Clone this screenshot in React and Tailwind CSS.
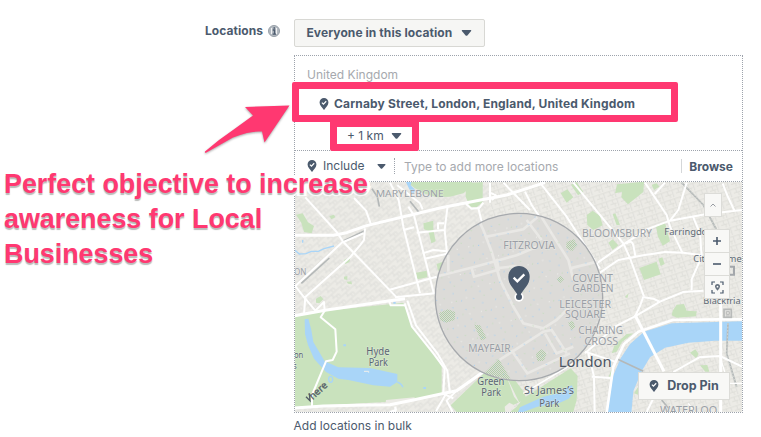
import React from "react";

function PinCheck({ className }) {
  return (
    <svg viewBox="0 0 10 13" className={className}>
      <path d="M5 0A4.8 4.8 0 0 0 .2 4.8C.2 8 3 9.600 4.300 12.300Q5 13.400 5.700 12.300C7 9.600 9.800 8 9.800 4.800A4.800 4.800 0 0 0 5 0Z" fill="#4b5a6d" />
      <path d="M2.700 5 4.400 6.600 7.400 3.500" fill="none" stroke="#fff" strokeWidth="1.300" />
    </svg>
  );
}

function Caret({ className }) {
  return (
    <svg viewBox="0 0 12 7" className={className}>
      <path d="M1 0H11Q12 .3 11.400 1.300L7 6.300Q6 7 5 6.300L.6 1.300Q0 .3 1 0Z" fill="#4b5a6d" />
    </svg>
  );
}

const green = "#c9e2bd";
const water = "#a9d5f8";

const labels = [
  ["MARYLEBONE", 257, 52, 204, 29, "#9aa0a6"],
  ["FITZROVIA", 640, 206, 155, 30, "#9a9fa6"],
  ["BLOOMSBURY", 876, 170, 210, 30, "#9aa0a6"],
  ["Farringdon", 1123, 164, 146, 29, "#5c6874"],
  ["City Thames", 1210, 245, 158, 29, "#5c6874"],
  ["Blackfria", 1240, 373, 112, 29, "#5c6874"],
  ["COVENT", 847, 306, 122, 30, "#9a9fa6"],
  ["GARDEN", 847, 337, 124, 30, "#9a9fa6"],
  ["LEICESTER", 808, 384, 155, 30, "#9a9fa6"],
  ["SQUARE", 825, 415, 122, 30, "#9a9fa6"],
  ["CHARING", 865, 461, 134, 30, "#9a9fa6"],
  ["CROSS", 883, 495, 102, 30, "#9a9fa6"],
  ["MAYFAIR", 535, 515, 127, 30, "#9a9fa6"],
  ["London", 806, 561, 159, 44, "#4b5563"],
  ["Hyde", 229, 525, 70, 30, "#5a6672"],
  ["Park", 236, 559, 58, 30, "#5a6672"],
  ["Green", 562, 614, 81, 30, "#5a6672"],
  ["Park", 574, 649, 59, 30, "#5a6672"],
  ["St James’s", 702, 643, 150, 30, "#5a6672"],
  ["Park", 748, 680, 60, 30, "#5a6672"],
  ["WATERLOO", 1110, 701, 172, 30, "#9aa0a6"],
  ["ON", 12, 284, 37, 29, "#9aa0a6"],
  ["on", 12, 534, 28, 29, "#5a6672"],
  ["s", 8, 568, 12, 29, "#5a6672"],
];

/* Map units are thirds of a pixel, so the finest streets keep whole numbers. */
function LondonMap() {
  return (
    <svg viewBox="15 6 1341 690" preserveAspectRatio="none" className="block h-full w-full">
      <defs>
        <pattern id="streets" width="36" height="24" patternUnits="userSpaceOnUse" patternTransform="rotate(-42)">
          <path d="M0 3H36M0 15H24M6 3V15M24 15V24M15 15V24" stroke="#dcdcd8" strokeWidth="2.500" fill="none" />
        </pattern>
        <pattern id="streetsEast" width="33" height="27" patternUnits="userSpaceOnUse" patternTransform="rotate(-18)">
          <path d="M0 5H33M0 17H20M9 5V17M24 5V27M14 17V27" stroke="#dcdcd8" strokeWidth="2.500" fill="none" />
        </pattern>
        <pattern id="specks" width="93" height="87" patternUnits="userSpaceOnUse" patternTransform="rotate(17)">
          <path d="M8 9h3M39 22h3M71 5h3M20 50h3M59 43h3M83 66h3M42 75h3" stroke="#9dccf5" strokeWidth="3" />
          <path d="M24 28h3M55 60h3M80 31h3M5 73h3" stroke="#bfdcb7" strokeWidth="3" />
          <path d="M50 9h3M12 35h3M74 52h3" stroke="#f2f2ef" strokeWidth="3" />
        </pattern>
        <pattern id="parkDots" width="6" height="6" patternUnits="userSpaceOnUse">
          <path d="M0 1.500h3M3 4.500h3" stroke="#b1cfa8" strokeWidth="3" />
        </pattern>
      </defs>
      <rect width="1360" height="700" fill="#ecebe6" />
      <rect width="600" height="700" fill="url(#streets)" />
      <rect x="600" width="760" height="700" fill="url(#streetsEast)" />

      {/* parks */}
      <g fill={green}>
        <path d="M342 0H548L542 22 520 40 480 50 440 52 400 40 374 24Z" />
        <path d="M528 10 578 6 578 66 560 82 540 80 527 50Z" />
        <path d="M18 104 38 100 54 127 72 138 65 160 42 156 34 128Z" />
        <path d="M118 108 132 104 136 112 124 118Z" />
        <path d="M400 130 430 122 430 150 437 184 424 190 415 152 402 148Z" />
        <path d="M378 278 410 272 412 292 382 298ZM440 252 462 244 462 268 444 272Z" />
        <path d="M162 240 182 230 178 246 166 252ZM162 290 172 288 172 300 162 298ZM170 305 184 304 186 313 174 311Z" />
        <path d="M78 356 92 348 100 358 88 370 78 368Z" />
        <path d="M812 40 832 28 850 52 830 68ZM843 14 860 6 880 36 864 46Z" />
        <path d="M890 105 908 92 930 108 938 136 910 150 892 135Z" />
        <path d="M981 13 1062 5 1060 36 1014 73 994 52 996 35 975 40Z" />
        <path d="M1085 14 1100 10 1108 20 1092 30Z" />
        <path d="M1098 140 1125 128 1140 184 1118 197 1104 170Z" />
        <path d="M955 188 968 178 985 196 968 210ZM968 103 976 100 990 134 980 136Z" />
        <path d="M1048 264 1100 245 1112 283 1062 300ZM1105 236 1117 232 1124 252 1112 258Z" />
        <path d="M1005 350 1016 340 1012 355Z" />
        <path d="M1148 392 1160 374 1182 372 1190 392 1220 394 1218 409 1160 413 1145 406Z" />
        <path d="M965 520 974 494 1010 462 1030 460 996 486 980 515ZM956 590 968 560 962 590Z" />
        <path d="M1200 518 1216 508 1226 522 1218 534ZM1230 556 1252 555 1258 575 1246 575ZM1032 640 1046 618 1046 645Z" />
      </g>
      <path d="M14 410 110 392 340 368 366 436 440 535 455 560 455 645 330 664 14 680Z" fill={green} />
      <path d="M288 660 374 652 370 666 286 676Z" fill="#ecebe6" />
      <path d="M582 580 626 536 700 634 710 656 658 680 650 696H500L482 676Z" fill={green} />
      <path d="M700 655 842 565 863 588 860 660 850 696H660L680 680Z" fill={green} />
      <path d="M650 590 672 650 690 672M644 680 658 668 670 674 662 696H646Z" fill="#ecebe6" />

      {/* water */}
      <g fill={water}>
        <path d="M44 418 55 416 64 450 70 486 104 544 145 562 240 564 322 582 322 606 300 620 250 616 175 600 145 596 108 576 72 536 54 495 45 462Z" />
        <path d="M690 682 760 650 820 636 830 622 846 616 852 636 836 656 806 670 742 680 700 696H684Z" />
        <path d="M952 700 968 590 992 535 1020 492 1062 455 1145 430 1358 424V482L1275 482 1195 488 1125 503 1080 532 1055 574 1030 634 1024 700Z" />
        <path d="M345 0H366L362 16 376 30 370 42 358 28Z" />
      </g>
      <path d="M14 210 28 222 48 221 64 214 85 214 102 206 132 198M38 180v8M322 606q12 4 17 16" fill="none" stroke={water} strokeWidth="4" />
      <ellipse cx="122" cy="598" rx="6" ry="9" fill="none" stroke={water} strokeWidth="4" />
      <path d="M160 496h8M400 624h8M310 368h7" stroke={water} strokeWidth="6" />
      <path d="M222 574h14v4" fill="none" stroke="#f0f0ec" strokeWidth="3" />

      {/* rail lines */}
      <path d="M160 183 224 152M34 310 118 234M360 64 388 98M246 26 262 50 268 80M1175 8 1240 75 1280 150M980 536 1060 574M1314 430 1310 520 1340 620M1115 660 1135 684" fill="none" stroke="#b4b8b8" strokeWidth="5" />
      <path d="M1175 8 1240 75 1280 150M1314 430 1310 520 1340 620" fill="none" stroke="#dfe4dd" strokeWidth="2" strokeDasharray="5 5" />

      {/* roads */}
      <g fill="none" stroke="#fff" strokeLinejoin="round">
        <g strokeWidth="9">
          <path d="M14 166H130L170 158 230 137 450 84 560 62 650 45 765 8" />
          <path d="M14 407 110 390 300 362 345 356" />
          <path d="M14 684 100 678 200 676 300 674 370 660 470 638 500 632 580 575 640 530 775 452" />
        </g>
        <g strokeWidth="6">
          <path d="M352 362 378 436 442 520 472 572 480 640" />
          <path d="M344 370 366 440 430 520 464 566 460 640" />
          <path d="M470 638 438 694M500 632 470 662 488 696M458 640 490 655" />
          <path d="M46 52 140 156 160 186 320 352" />
          <path d="M192 54 228 92 244 136" />
          <path d="M160 184 16 318 50 362M45 352 180 232 210 196 222 180 225 145M160 186 220 160" />
          <path d="M300 8 326 60 340 140 390 340" />
          <path d="M355 80 372 106 432 342M322 16 390 70 398 88M340 150 372 142" />
          <path d="M380 158 462 150M444 148V130H462M472 84 464 150 470 210 474 275M398 220 430 210 470 214M404 236 468 222" />
          <path d="M296 330 440 290M315 352 435 340" />
          <path d="M42 404 46 350M46 356 76 392 102 366 104 392 92 412 136 448 140 515 128 540 108 544 66 645V680" />
          <path d="M298 365 302 376 345 376M316 680 318 690 300 696M316 680V696" />
          <path d="M564 80 580 146M705 35 725 75 835 240 850 300M750 8 830 110 930 266M640 8 720 90" />
          <path d="M528 72 545 86 568 84 580 68M600 8v60M600 38 618 46 606 60" />
          <path d="M850 8 1000 190 1020 234 1062 350" />
          <path d="M1065 8 1130 105 1140 140 1178 220" />
          <path d="M1190 8 1165 90 1140 122M1125 8 1094 42" />
          <path d="M920 250 1005 190 1070 148 1140 122 1250 102 1356 90M1298 10 1310 42 1334 94M1210 112 1230 160 1235 230 1205 298V330" />
          <path d="M930 278 985 240 1060 226 1125 216 1180 218 1235 226M1008 192Q1024 176 1030 196L1036 228" />
          <path d="M885 520 975 440 1035 409 1110 365 1180 336 1240 332M1062 352 1090 356 1110 366" />
          <path d="M1060 350 1050 378 1035 409" />
        </g>
        <path d="M1035 405 1122 574" strokeWidth="9" />
        <path d="M950 698 970 560 1002 492 1045 455 1148 420 1290 418 1358 418" strokeWidth="8" />
        <path d="M1292 365V700" strokeWidth="9" />
        <g strokeWidth="6">
          <path d="M1150 576 1228 532 1290 528 1356 560M905 590 962 594M895 520 912 590 914 696M1070 696 1090 655M885 515 975 545" />
        </g>
        <g strokeWidth="4">
          <path d="M700 640 850 550M1290 530 1315 610H1358M1195 670 1210 690" />
        </g>
      </g>

      {/* targeting radius */}
      <circle cx="687" cy="351" r="251" fill="#dcdbd8" />
      <g fill="none" stroke="#e9e8e5" strokeWidth="8">
        <path d="M564 116 580 150 605 215 630 300 670 380 700 430 760 445 800 420 836 384" />
        <path d="M446 288 555 260 680 226 740 200M590 170 700 148 742 112M710 120 755 180M755 112 835 240 850 300" />
        <path d="M545 264 552 290 630 268M620 236 625 264 680 258M840 265 922 245" />
        <path d="M628 540 760 455 785 450 830 520M664 510 712 580 840 520M765 460 800 520 850 500M475 225V275" />
      </g>
      <circle cx="687" cy="351" r="251" fill="url(#specks)" />
      <g fill="url(#parkDots)">
        <path d="M830 186 852 178 862 196 846 214 828 204ZM800 296 812 288 822 298 810 310Z" />
        <path d="M448 398 474 388 496 396 494 420 468 428 450 420Z" />
        <path d="M552 434 570 436 590 474 574 482ZM738 520 754 508 770 520 762 542 742 544ZM834 428 848 422 856 440 844 450Z" />
        <path d="M582 580 626 536 663 600 620 590Z" />
      </g>
      <circle cx="687" cy="351" r="251" fill="none" stroke="#a6a9ad" strokeWidth="4" />

      <g style={{ fontFamily: '"Noto Sans", "Open Sans", sans-serif' }}>
        {labels.map(([t, x, y, w, s, c], i) => (
          <text key={i} x={x} y={y} textLength={w} lengthAdjust="spacingAndGlyphs" fontSize={s} fill={c} stroke="#f2f1ee" strokeWidth="3" strokeOpacity=".5" paintOrder="stroke">{t}</text>
        ))}
      </g>
      <rect x="1302" y="388" width="22" height="24" fill="#e2e2df" stroke="#b8bab9" strokeWidth="5" />
      <path d="M1308 408h11M1309 395h9v8h-9Z" fill="none" stroke="#b8bab9" strokeWidth="3" />
      <path d="M1318 260h14v24h-14" fill="none" stroke="#a3a7ab" strokeWidth="6" />
      <text transform="translate(68 660) rotate(-42)" fontSize="29" textLength="62" lengthAdjust="spacingAndGlyphs" fill="#545d66" stroke="#545d66" strokeWidth="1" fontFamily="Noto Sans, sans-serif">here</text>
      <path d="M48 650 60 662 58 640" stroke="#545d66" strokeWidth="4" fill="none" />

      {/* selected place marker */}
      <circle cx="687" cy="351" r="14" fill="#fff" />
      <path d="M687 258A32 32 0 0 0 655 290C655 316 674 326 683 346H691C700 326 719 316 719 290A32 32 0 0 0 687 258Z" fill="#4b5a6d" />
      <circle cx="687" cy="351" r="9" fill="#4b5a6d" />
      <path d="M671 293 682 304 703 283" fill="none" stroke="#fff" strokeWidth="7" />
    </svg>
  );
}

const control = "flex items-center justify-center border border-[#dcdcd8] bg-[#f8f8f6]";

export default function App() {
  return (
    <div className="relative h-[437px] w-[761px] overflow-hidden bg-white font-['Inter','Liberation_Sans',sans-serif] text-[12px] leading-4 text-[#4b5a6d]">
      <div className="flex items-start pl-[205px] pt-[19px]">
        <div className="flex w-[89px] items-center pt-1 font-bold">
          <span className="w-[58px] whitespace-nowrap tracking-[0.05px]">Locations</span>
          <svg viewBox="0 0 12 12" className="ml-[5px] h-3 w-3">
            <circle cx="6" cy="6" r="5.500" fill="#b4bac1" stroke="#98a0a9" />
            <path d="M4.800 5H6.500V9M4.600 9.200H8M5.500 3H7" stroke="#4b5a6d" strokeWidth="1.300" fill="none" />
            <path d="M3.500 3V9M8.500 3V9" stroke="#fff" strokeWidth=".8" />
          </svg>
        </div>
        <button className="flex h-7 w-[191px] items-center rounded-[2px] border border-[#d8d8d4] bg-[#f6f6f4] pl-[11.500px] font-bold">
          <span className="w-[147px] whitespace-nowrap text-left tracking-[0.08px]">Everyone in this location</span>
          <Caret className="ml-[7px] h-[6px] w-[11px]" />
        </button>
      </div>

      <div className="ml-[294px] mt-2 flex h-[358px] w-[449px] flex-col border border-dotted border-[#9da3ac]">
        <div className="flex h-[94px] flex-col">
          <div className="pl-[12px] pt-[11px] text-[#a6a9ae]">United Kingdom</div>
          <div className="mt-[13px] flex items-center pl-6 font-bold">
            <PinCheck className="h-3 w-[10px]" />
            <span className="ml-[5px] whitespace-nowrap tracking-[0.16px]">Carnaby Street, London, England, United Kingdom</span>
          </div>
          <div className="mt-4 flex items-center pl-[52px]">
            <span className="w-[37px] whitespace-nowrap">+ 1 km</span>
            <Caret className="ml-[7px] h-[6px] w-[11px]" />
          </div>
        </div>
        <div className="flex h-8 items-center border-y border-dotted border-[#9da3ac]">
          <PinCheck className="ml-3 h-3 w-[10px]" />
          <span className="ml-[6px] w-[41px]">Include</span>
          <Caret className="ml-[13px] h-[5px] w-[9px]" />
          <div className="ml-[8px] h-4 border-l border-dotted border-[#9da3ac]" />
          <span className="ml-[9px] grow pt-px text-[#a6a9ae]">Type to add more locations</span>
          <div className="h-[14px] w-px bg-[#d5d7d9]" />
          <span className="ml-[7px] mr-[9px] pt-px font-bold">Browse</span>
        </div>
        <div className="min-h-0 grow">
          <LondonMap />
        </div>
      </div>
      <div className="ml-[293.500px] mt-[5px]">Add locations in bulk</div>

      {/* controls over the map */}
      <div className={control + " absolute left-[704px] top-[193px] h-[24px] w-[18px]"}>
        <svg viewBox="0 0 6 4" className="h-1 w-[6px]"><path d="M.5 3.500 3 1 5.500 3.500" fill="none" stroke="#999da3" /></svg>
      </div>
      <div className="absolute left-[704px] top-[229px] flex w-[26px] flex-col">
        <div className={control + " h-[24px]"}>
          <svg viewBox="0 0 8 8" className="h-2 w-2"><path d="M4 0V8M0 4H8" stroke="#4b5a6d" strokeWidth="1.600" /></svg>
        </div>
        <div className={control + " -mt-px h-[24px]"}>
          <svg viewBox="0 0 8 8" className="h-2 w-2"><path d="M0 4H8" stroke="#4b5a6d" strokeWidth="1.600" /></svg>
        </div>
        <div className={control + " -mt-px h-[24px]"}>
          <svg viewBox="0 0 13 13" className="h-[13px] w-[13px]">
            <path d="M1 4V1H4M9 1H12V4M12 9V12H9M4 12H1V9" fill="none" stroke="#4b5a6d" strokeWidth="1.200" />
            <path d="M6.500 3A2.600 2.600 0 0 0 4 5.700Q4.200 7.300 6.500 9.800Q8.800 7.300 9 5.700A2.600 2.600 0 0 0 6.500 3Z" fill="#68737f" />
            <circle cx="6.500" cy="5.700" r=".9" fill="#fff" />
          </svg>
        </div>
      </div>
      <div className={control + " absolute left-[638px] top-[372px] h-[28px] w-[92px]"}>
        <PinCheck className="h-3 w-[10px]" />
        <span className="ml-2 whitespace-nowrap text-[12.500px] font-bold">Drop Pin</span>
      </div>

      {/* callouts */}
      <div className="absolute left-[292px] top-[82px] h-[40px] w-[386px] rounded-[2px] border-[7px] border-[#ff3871]" />
      <div className="absolute left-[330px] top-[120px] h-[31px] w-[89px] rounded-[2px] border-[7px] border-[#ff3871]" />
      <svg viewBox="0 0 90 54" className="absolute left-[202px] top-[101px] h-[54px] w-[90px] [filter:drop-shadow(0_1px_1px_rgba(0,0,0,0.35))]">
        <path d="M3 50.500Q16 39 31 29L51 14.500 43 6 87.500 4.500 62.500 41.500 60 30.500Q48 29.500 31 36.500L4 51.800Q2.500 52 3 50.500Z" fill="#ff3871" />
      </svg>
      <div className="absolute left-[4px] top-[167px] whitespace-nowrap font-['Liberation_Sans',sans-serif] text-[26.850px] font-bold leading-[35px] text-[#ff3871] [-webkit-text-stroke:6px_white] [paint-order:stroke_fill] [text-shadow:0_2px_1px_#b9bbb9]">
        <div>Perfect objective to increase</div>
        <div>awareness for Local</div>
        <div>Businesses</div>
      </div>
    </div>
  );
}
